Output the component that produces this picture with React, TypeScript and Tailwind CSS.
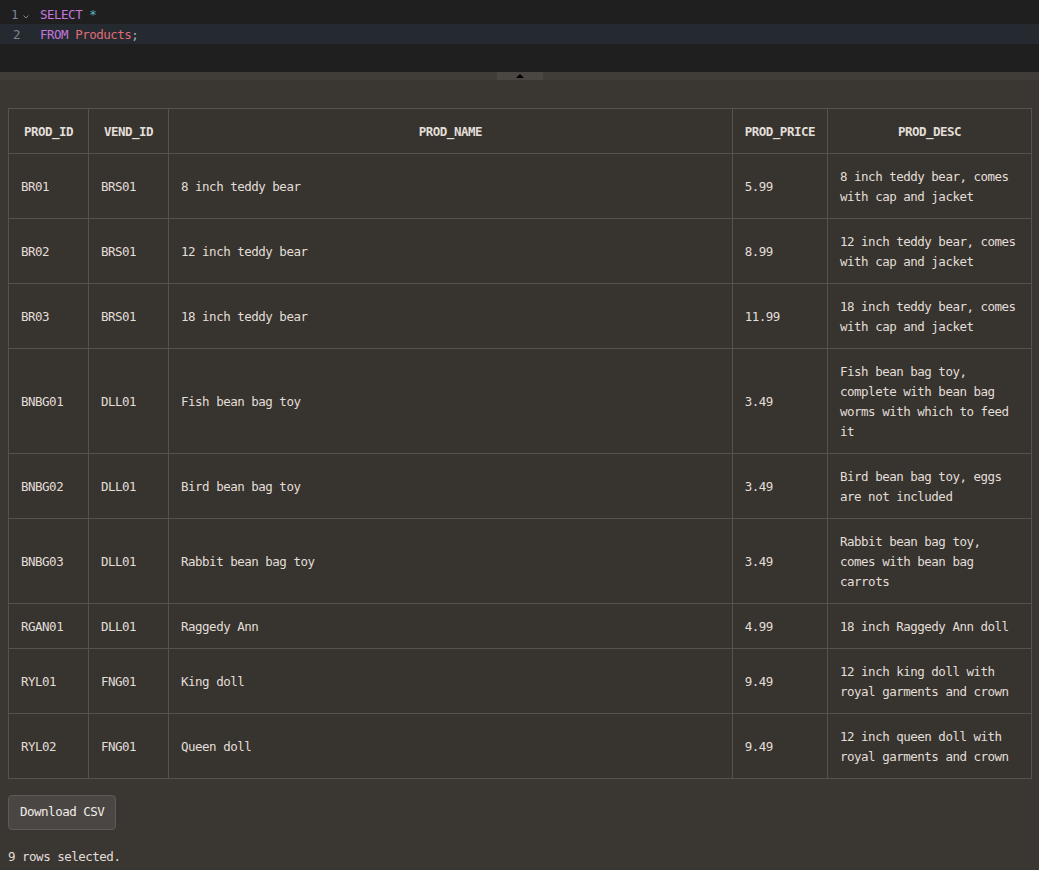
import { useState } from "react";

interface Product {
  id: string;
  vend: string;
  name: string;
  price: string;
  desc: string;
}

const products: Product[] = [
  { id: "BR01", vend: "BRS01", name: "8 inch teddy bear", price: "5.99", desc: "8 inch teddy bear, comes with cap and jacket" },
  { id: "BR02", vend: "BRS01", name: "12 inch teddy bear", price: "8.99", desc: "12 inch teddy bear, comes with cap and jacket" },
  { id: "BR03", vend: "BRS01", name: "18 inch teddy bear", price: "11.99", desc: "18 inch teddy bear, comes with cap and jacket" },
  { id: "BNBG01", vend: "DLL01", name: "Fish bean bag toy", price: "3.49", desc: "Fish bean bag toy, complete with bean bag worms with which to feed it" },
  { id: "BNBG02", vend: "DLL01", name: "Bird bean bag toy", price: "3.49", desc: "Bird bean bag toy, eggs are not included" },
  { id: "BNBG03", vend: "DLL01", name: "Rabbit bean bag toy", price: "3.49", desc: "Rabbit bean bag toy, comes with bean bag carrots" },
  { id: "RGAN01", vend: "DLL01", name: "Raggedy Ann", price: "4.99", desc: "18 inch Raggedy Ann doll" },
  { id: "RYL01", vend: "FNG01", name: "King doll", price: "9.49", desc: "12 inch king doll with royal garments and crown" },
  { id: "RYL02", vend: "FNG01", name: "Queen doll", price: "9.49", desc: "12 inch queen doll with royal garments and crown" },
];

const headers = ["PROD_ID", "VEND_ID", "PROD_NAME", "PROD_PRICE", "PROD_DESC"];

const cell = "border border-[#56524d] px-3 pt-[13px] pb-[11px] align-middle";

const Editor = () => (
  <div className="h-[72px] bg-[#1f1f1f] pt-1 text-[12.5px] leading-5">
    <div className="flex h-5 items-center pt-[1px]">
      <div className="flex w-[34px] items-center justify-end pr-1 text-[#7d8590]">
        <span>1</span>
        <svg width="8" height="8" viewBox="0 0 8 8" className="ml-1 mt-1">
          <path d="M1.5 2.5 L4 5 L6.5 2.5" stroke="#7d8590" strokeWidth="1" fill="none" />
        </svg>
      </div>
      <div className="pl-[6px]">
        <span className="text-[#c678dd]">SELECT</span>{" "}
        <span className="text-[#56b6c2]">*</span>
      </div>
    </div>
    <div className="flex h-5 items-center bg-[#252930] pt-[1px]">
      <div className="flex w-[34px] justify-end pr-[14px] text-[#7d8590]">2</div>
      <div className="pl-[6px]">
        <span className="text-[#c678dd]">FROM</span>{" "}
        <span className="text-[#e06c75]">Products</span>
        <span className="text-[#abb2bf]">;</span>
      </div>
    </div>
  </div>
);

const App = () => {
  const [rows] = useState(products);

  return (
    <div
      className="min-h-[870px] bg-[#3a3632] text-[12.5px] tracking-[-0.5px] text-[#e2ded8]"
      style={{ fontFamily: '"DejaVu Sans Mono", monospace' }}
    >
      <Editor />
      <div className="flex h-2 justify-center bg-[#403c37]">
        <div className="flex w-[46px] items-start justify-center bg-[#4a4641]">
          <svg width="10" height="5" viewBox="0 0 10 5" className="mt-[1px]">
            <path d="M1 5 L5 1 L9 5 Z" fill="#000" />
          </svg>
        </div>
      </div>
      <div className="pl-2 pr-[7px] pt-7">
        <table className="w-full border-collapse bg-[#37332f] leading-5">
          <thead>
            <tr>
              {headers.map((h, i) => (
                <th
                  key={h}
                  className={`${cell} font-bold ${i === 0 || i === 1 ? "w-[80px]" : ""} ${
                    i === 3 ? "w-[95px]" : ""
                  } ${i === 4 ? "w-[204px]" : ""}`}
                >
                  {h}
                </th>
              ))}
            </tr>
          </thead>
          <tbody>
            {rows.map((r) => (
              <tr key={r.id}>
                <td className={cell}>{r.id}</td>
                <td className={cell}>{r.vend}</td>
                <td className={cell}>{r.name}</td>
                <td className={cell}>{r.price}</td>
                <td className={cell}>{r.desc}</td>
              </tr>
            ))}
          </tbody>
        </table>
        <button className="mt-4 h-[35px] rounded border border-[#5e5a55] bg-[#4a4643] px-[11px] text-[12.5px] text-[#f0ede8]">
          Download CSV
        </button>
        <p className="mt-[17px] leading-5">{rows.length} rows selected.</p>
      </div>
    </div>
  );
};

export default App;
